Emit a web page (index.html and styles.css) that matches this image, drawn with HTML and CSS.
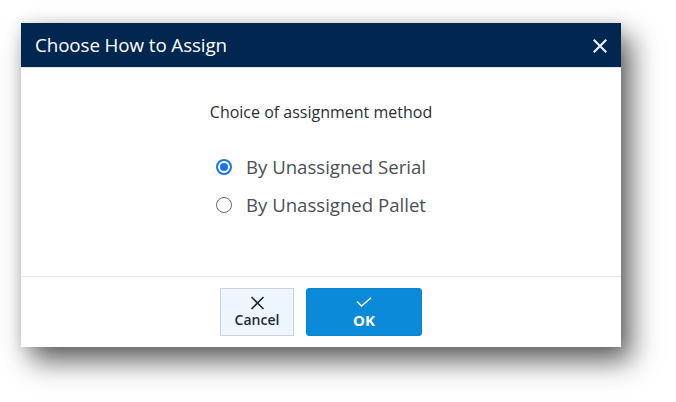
FILE: index.html
```html
<!DOCTYPE html>
<html>
<head>
<meta charset="utf-8">
<link rel="stylesheet" href="styles.css">
</head>
<body>
<div class="stage">
  <div class="dialog">
    <div class="header">
      <span class="title">Choose How to Assign</span>
      <svg class="close" width="14" height="14" viewBox="0 0 14 14"><path d="M1.5 1.5 L12.5 12.5 M12.5 1.5 L1.5 12.5" stroke="#e8edf3" stroke-width="2.2" stroke-linecap="square"/></svg>
    </div>
    <div class="body">
      <div class="prompt">Choice of assignment method</div>
      <div class="options">
        <label class="option"><span class="radio checked"></span><span>By Unassigned Serial</span></label>
        <label class="option"><span class="radio"></span><span>By Unassigned Pallet</span></label>
      </div>
    </div>
    <div class="footer">
      <button class="btn cancel">
        <svg width="15" height="14" viewBox="0 0 15 14"><path d="M1.5 1 L13.5 13 M13.5 1 L1.5 13" stroke="#1e2b3b" stroke-width="1.6"/></svg>
        <span>Cancel</span>
      </button>
      <button class="btn ok">
        <svg width="16" height="10" viewBox="0 0 16 10"><path d="M1 4.5 L5.5 9 L15 0.8" stroke="#ffffff" stroke-width="1.4" fill="none"/></svg>
        <span>OK</span>
      </button>
    </div>
  </div>
</div>
</body>
</html>
```

FILE: styles.css
```css
* { box-sizing: border-box; }
html, body { margin: 0; padding: 0; background: #ffffff; }
body { font-family: "Open Sans", "Noto Sans", sans-serif; }
.stage { padding: 23px 0 0 21px; width: 676px; height: 402px; overflow: hidden; }
.dialog {
  width: 600px;
  height: 324px;
  background: #ffffff;
  display: flex;
  flex-direction: column;
  box-shadow: 10px 14px 26px rgba(0,0,0,0.62), 0 0 12px rgba(0,0,0,0.10);
}
.header {
  height: 45px;
  background: #01264f;
  display: flex;
  align-items: center;
  justify-content: space-between;
  padding: 0 14px 0 14px;
  border-bottom: 1px solid #dfe5ec;
}
.title { color: #ffffff; font-size: 18.8px; letter-spacing: -0.1px; }
.close { display: block; margin-top: 1px; }
.body {
  flex: 1;
  display: flex;
  flex-direction: column;
  align-items: center;
  padding-top: 33px;
  border-bottom: 1px solid #e3e6ea;
}
.prompt { font-size: 16px; line-height: 22px; color: #2b2f33; }
.options { margin-top: 31px; display: flex; flex-direction: column; gap: 12px; }
.option { display: flex; align-items: center; gap: 14px; font-size: 18.6px; line-height: 26px; color: #4a4f55; }
.radio {
  width: 16px; height: 16px; border-radius: 50%;
  border: 1.5px solid #6b6b6b;
  display: inline-block;
  position: relative;
  flex: none;
}
.radio.checked { border: 2px solid #1a73e8; }
.radio.checked::after {
  content: ""; position: absolute; left: 2px; top: 2px; width: 8px; height: 8px; border-radius: 50%; background: #1a73e8;
}
.footer {
  height: 70px;
  display: flex;
  justify-content: center;
  align-items: flex-start;
  gap: 12px;
  padding-top: 11px;
}
.btn {
  height: 48px;
  display: flex;
  flex-direction: column;
  align-items: center;
  justify-content: center;
  font-family: "Open Sans", "Noto Sans", sans-serif;
  font-size: 14px;
  font-weight: 600;
  line-height: 16px;
  padding: 0;
  cursor: pointer;
}
.btn svg { display: block; }
.cancel { width: 74px; background: #eef5ff; border: 1px solid #c9d3de; color: #1e2b3b; gap: 2px; }
.ok { width: 116px; background: #0a8ad8; border: 1px solid #0a84cf; border-radius: 3px; color: #ffffff; gap: 5px; font-weight: 700; font-size: 15px; }
```
